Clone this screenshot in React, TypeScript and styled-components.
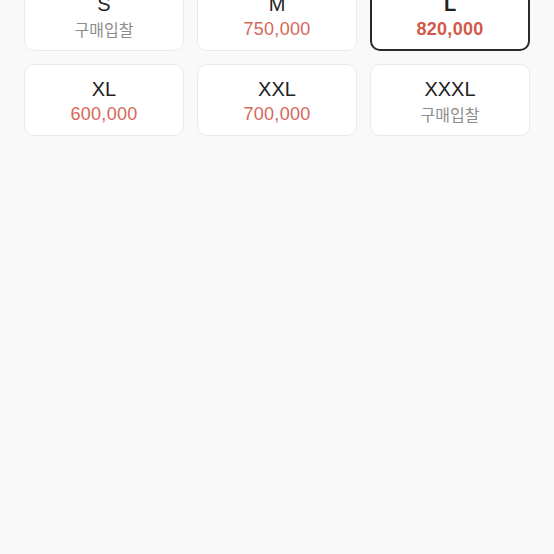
import { FC } from 'react';
import styled, { createGlobalStyle } from 'styled-components';

const GlobalStyle = createGlobalStyle`
  html, body {
    margin: 0;
    padding: 0;
    background: #f9f9f9;
  }
  body {
    font-family: Inter, "Noto Sans CJK KR", sans-serif;
  }
  * {
    box-sizing: border-box;
  }
`;

const Page = styled.div`
  min-height: 554px;
  background: #f9f9f9;
  overflow: hidden;
`;

const SizeGrid = styled.ul`
  display: grid;
  grid-template-columns: repeat(3, 1fr);
  gap: 13px;
  margin: -21px 0 0;
  padding: 0 24px;
  list-style: none;
`;

const SizeCard = styled.li<{ $selected?: boolean }>`
  height: 72px;
  display: flex;
  flex-direction: column;
  align-items: center;
  justify-content: center;
  gap: 2px;
  padding-top: 2px;
  background: #fff;
  border: ${(p) => (p.$selected ? '2px solid #2a2a2a' : '1px solid #ebebeb')};
  border-radius: 10px;
  cursor: pointer;
`;

const SizeLabel = styled.span<{ $selected?: boolean }>`
  font-family: "Liberation Sans", Arial, sans-serif;
  font-size: 20px;
  line-height: 24px;
  font-weight: ${(p) => (p.$selected ? 700 : 400)};
  color: #222;
`;

const Price = styled.span<{ $selected?: boolean }>`
  font-family: "Liberation Sans", Arial, sans-serif;
  font-size: 18px;
  line-height: 22px;
  letter-spacing: 0.3px;
  font-weight: ${(p) => (p.$selected ? 700 : 400)};
  color: ${(p) => (p.$selected ? '#d2584a' : '#d5665a')};
`;

const BidLabel = styled.span`
  font-family: "Noto Sans CJK KR", sans-serif;
  font-size: 16px;
  line-height: 22px;
  color: #8c8c8c;
`;

interface SizeItem {
  size: string;
  price?: string;
}

const sizes: SizeItem[] = [
  { size: 'S' },
  { size: 'M', price: '750,000' },
  { size: 'L', price: '820,000' },
  { size: 'XL', price: '600,000' },
  { size: 'XXL', price: '700,000' },
  { size: 'XXXL' },
];

const App: FC = () => {
  const selected = 'L';

  return (
    <Page>
      <GlobalStyle />
      <SizeGrid>
        {sizes.map((item) => {
          const isSelected = item.size === selected;
          return (
            <SizeCard key={item.size} $selected={isSelected}>
              <SizeLabel $selected={isSelected}>{item.size}</SizeLabel>
              {item.price ? (
                <Price $selected={isSelected}>{item.price}</Price>
              ) : (
                <BidLabel>구매입찰</BidLabel>
              )}
            </SizeCard>
          );
        })}
      </SizeGrid>
    </Page>
  );
};

export default App;
